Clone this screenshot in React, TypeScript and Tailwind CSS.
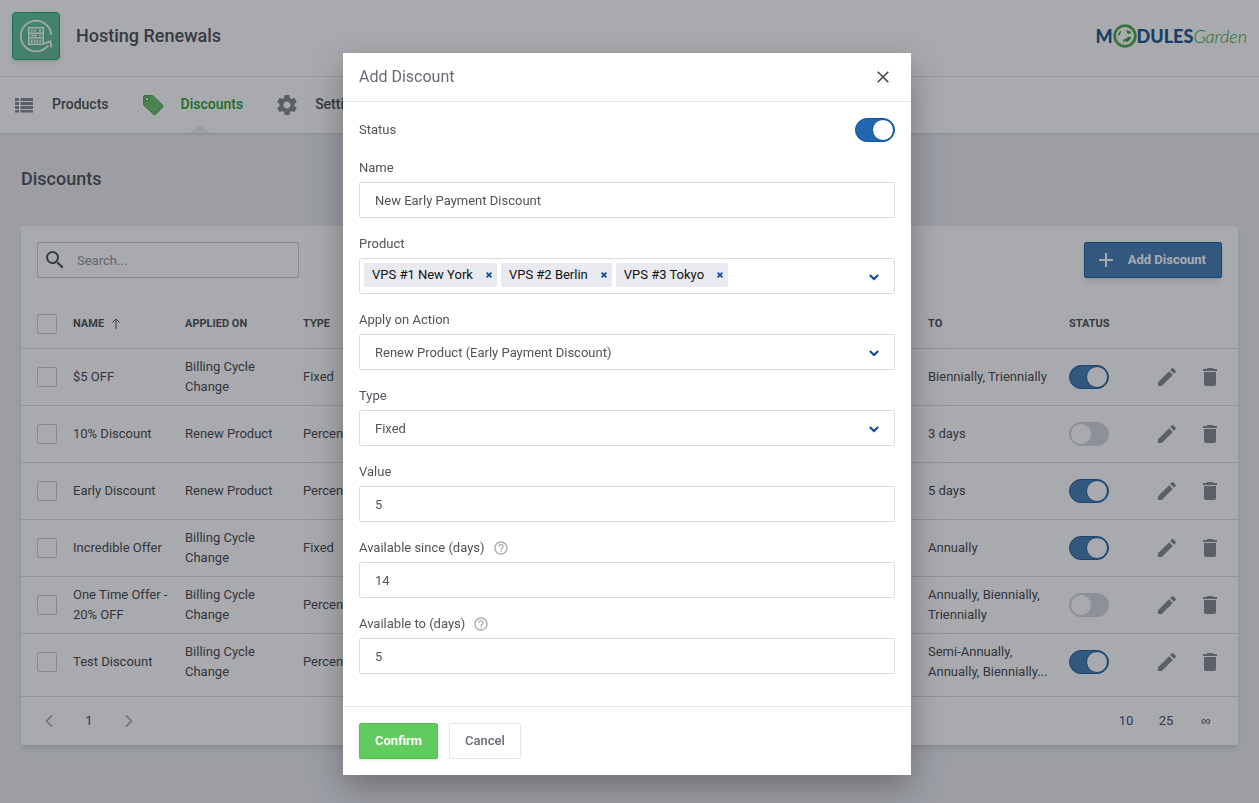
import React from "react";
import { MdDelete, MdEdit, MdHelpOutline, MdSearch } from "react-icons/md";

type Discount = {
  name: string;
  appliedOn: string;
  type: string;
  to: string;
  active: boolean;
};

const discounts: Discount[] = [
  { name: "$5 OFF", appliedOn: "Billing Cycle Change", type: "Fixed", to: "Biennially, Triennially", active: true },
  { name: "10% Discount", appliedOn: "Renew Product", type: "Percentage", to: "3 days", active: false },
  { name: "Early Discount", appliedOn: "Renew Product", type: "Percentage", to: "5 days", active: true },
  { name: "Incredible Offer", appliedOn: "Billing Cycle Change", type: "Fixed", to: "Annually", active: true },
  { name: "One Time Offer - 20% OFF", appliedOn: "Billing Cycle Change", type: "Percentage", to: "Annually, Biennially, Triennially", active: false },
  { name: "Test Discount", appliedOn: "Billing Cycle Change", type: "Percentage", to: "Semi-Annually, Annually, Biennially...", active: true },
];

const products = ["VPS #1 New York", "VPS #2 Berlin", "VPS #3 Tokyo"];

function AppIcon() {
  return (
    <svg viewBox="0 0 48 48" className="size-12 rounded-sm shadow-md" aria-hidden="true">
      <defs>
        <linearGradient id="app-bg" x1="0" y1="0" x2="1" y2="1">
          <stop offset="0" stopColor="#4fc498" />
          <stop offset="1" stopColor="#5cb492" />
        </linearGradient>
      </defs>
      <rect x="0.5" y="0.5" width="47" height="47" rx="2.5" fill="url(#app-bg)" stroke="#0fa268" />
      <g fill="none" stroke="#fff" strokeWidth="1.7">
        <path d="M39.3 23 A15.3 15.3 0 1 0 36.3 33.2" />
        <path d="M32 31.8 L38.3 29.2 L39.5 35.5" />
        <path d="M16.8 15.8 H31.2 V32.2 H16.8 Z" strokeWidth="1.5" />
        <path d="M17 21.2 H31 M17 25.8 H31" strokeWidth="1.5" />
      </g>
      <path d="M19 17.8 h2 v1.6 h-2 z M22 17.8 h2 v1.6 h-2 z M27 17.8 h2 v1.6 h-2 z M19 22.8 h6 v1.4 h-6 z M27 22.8 h2 v1.4 h-2 z M19 27.4 h1.5 v3.4 H19 z M21.8 27.4 h1.5 v3.4 h-1.5 z M24.6 27.4 h1.5 v3.4 h-1.5 z M27.4 27.4 h1.5 v3.4 h-1.5 z" fill="#fff" />
    </svg>
  );
}

function ListIcon() {
  return (
    <svg viewBox="0 0 24 24" className="size-6 fill-[#7d828c]" aria-hidden="true">
      <path d="M3 5h4v3H3zM8.5 5H21v3H8.5zM3 9h4v3H3zM8.5 9H21v3H8.5zM3 13h4v3H3zM8.5 13H21v3H8.5zM3 17h4v2.5H3zM8.5 17H21v2.5H8.5z" />
    </svg>
  );
}

function TagIcon() {
  return (
    <svg viewBox="0 0 24 24" className="size-6" aria-hidden="true">
      <path
        fillRule="evenodd"
        d="M3 2.7 L11.2 2.7 Q11.9 2.7 12.4 3.2 L21.8 12.5 Q22.5 13.2 21.8 13.9 L14.4 21.5 Q13.7 22.2 13 21.5 L3.1 12.6 Q2.7 12.2 2.7 11.6 L2.7 3.1 Z M6 4.3 A1.7 1.7 0 1 0 6 7.7 A1.7 1.7 0 1 0 6 4.3 Z"
        fill="#68bd68"
        stroke="#1c9d30"
        strokeWidth="1"
      />
    </svg>
  );
}

function GearIcon() {
  return (
    <svg viewBox="0 0 24 24" className="size-6 fill-[#7d828c]" aria-hidden="true">
      <path d="M19.43 12.98c.04-.32.07-.64.07-.98s-.03-.66-.07-.98l2.11-1.65c.19-.15.24-.42.12-.64l-2-3.46c-.12-.22-.39-.3-.61-.22l-2.49 1c-.52-.4-1.08-.73-1.69-.98l-.38-2.65C14.46 2.18 14.25 2 14 2h-4c-.25 0-.46.18-.49.42l-.38 2.65c-.61.25-1.17.59-1.69.98l-2.49-1c-.23-.09-.49 0-.61.22l-2 3.46c-.13.22-.07.49.12.64l2.11 1.65c-.04.32-.07.65-.07.98s.03.66.07.98l-2.11 1.65c-.19.15-.24.42-.12.64l2 3.46c.12.22.39.3.61.22l2.49-1c.52.4 1.08.73 1.69.98l.38 2.65c.03.24.24.42.49.42h4c.25 0 .46-.18.49-.42l.38-2.65c.61-.25 1.17-.59 1.69-.98l2.49 1c.23.09.49 0 .61-.22l2-3.46c.12-.22.07-.49-.12-.64l-2.11-1.65zM12 15.5c-1.93 0-3.5-1.57-3.5-3.5s1.57-3.5 3.5-3.5 3.5 1.57 3.5 3.5-1.57 3.5-3.5 3.5z" />
    </svg>
  );
}

function Globe() {
  return (
    <svg viewBox="0 0 26 26" className="size-6 shrink-0" aria-hidden="true">
      <circle cx="13" cy="13" r="11.2" fill="none" stroke="#4fae52" strokeWidth="3" />
      <circle cx="13" cy="13" r="11.2" fill="none" stroke="#2f9a38" strokeWidth="1" />
      <g fill="#2f9a38">
        <path d="M5.5 11.5 L7 8.5 L9 7.2 L8.6 9.6 L7.4 10 L7.6 12 L6.2 12.6 Z" />
        <path d="M14 7 L15.8 6 L15.4 7.6 L17.5 7.2 L19.4 8.8 L19.2 10.6 L17.6 10 L17 11 L15 9.6 L15.4 8.6 Z" />
        <path d="M10.8 18.2 L12.8 16 L14.5 16.2 L16 14 L18.2 14.2 L19.4 13.4 L19.2 16 L16.5 18.8 L13.8 19.8 L14 18 L12.6 18.1 L12 19.8 L10.8 19.6 Z" />
      </g>
    </svg>
  );
}

function ArrowGlyph({ d, className }: { d: string; className: string }) {
  return (
    <svg viewBox="0 0 16 16" className={className} fill="none" stroke="currentColor" aria-hidden="true">
      <path d={d} />
    </svg>
  );
}

const toggleClass =
  "block h-6 w-10 shrink-0 cursor-pointer appearance-none rounded-full border border-[#d0d2de] bg-[#d0d2de] before:block before:size-[22px] before:rounded-full before:border before:border-[#d0d2de] before:bg-white checked:before:translate-x-4";
const strongToggle = "checked:border-[#0d54a6] checked:bg-[#2167b0] checked:before:border-[#0d54a6]";
const softToggle = "checked:border-[#0d5a9a] checked:bg-[#3b77b2] checked:before:border-[#0d5a9a]";

function Toggle({ label, on, id, soft }: { label?: string; on: boolean; id?: string; soft?: boolean }) {
  return (
    <input
      type="checkbox"
      role="switch"
      id={id}
      aria-label={label}
      defaultChecked={on}
      className={`${toggleClass} ${soft ? softToggle : strongToggle}`}
    />
  );
}

const checkboxClass = "block size-5 appearance-none rounded-xs border border-[#c4c6d3] bg-white checked:bg-[#2167b0]";
const fieldClass =
  "h-9 w-full appearance-none rounded-xs border border-[#d8dae6] bg-white px-[15px] text-[13px] leading-5 text-[#505459]";

function Field({ id, label, help, children }: { id: string; label: string; help?: boolean; children: React.ReactNode }) {
  return (
    <div className="flex flex-col gap-1">
      <div className="flex h-5 items-center gap-2">
        <label htmlFor={id}>{label}</label>
        {help && <MdHelpOutline className="size-4 text-[#a9abae]" aria-hidden="true" />}
      </div>
      {children}
    </div>
  );
}

function Caret() {
  return (
    <ArrowGlyph
      d="M3.8 6 L8 10 L12.2 6"
      className="pointer-events-none absolute top-[11px] right-[13px] size-4 stroke-2 text-[#0d47a1]"
    />
  );
}

function SelectField({ id, value }: { id: string; value: string }) {
  return (
    <div className="relative">
      <select id={id} className={`${fieldClass} pt-px`} defaultValue={value}>
        <option>{value}</option>
      </select>
      <Caret />
    </div>
  );
}

function Header() {
  return (
    <header className="bg-white shadow-sm">
      <div className="flex h-[77px] items-center justify-between border-b border-[#e3e4ea] px-3 pb-1">
        <div className="flex items-center gap-4">
          <AppIcon />
          <h1 className="text-lg font-medium text-[#42464e]">Hosting Renewals</h1>
        </div>
        <a href="#home" className="flex items-center font-[Lato] text-[18px] leading-6" aria-label="ModulesGarden">
          <span className="font-black text-[#0c4d8c]">M</span>
          <Globe />
          <span className="font-black text-[#0c4d8c]">DULES</span>
          <span className="font-light text-[#169b1c] italic">Garden</span>
        </a>
      </div>
      <nav className="flex h-14 items-center gap-8 px-3 text-sm font-medium text-[#42464e]">
        <a href="#products" className="flex items-center gap-4">
          <ListIcon />
          <span className="pb-0.5">Products</span>
        </a>
        <a href="#discounts" className="relative flex h-full items-center gap-4 text-[#169b1c]">
          <TagIcon />
          <span className="pb-0.5">Discounts</span>
          <span className="absolute right-0 bottom-0 left-4 flex justify-center">
            <svg viewBox="0 0 20 8" className="h-2 w-5" aria-hidden="true">
              <path d="M0 8 L8.8 0.6 Q10 -0.3 11.2 0.6 L20 8 Z" fill="#e9ebf1" />
            </svg>
          </span>
        </a>
        <a href="#settings" className="flex items-center gap-4">
          <GearIcon />
          <span className="pb-0.5">Settings</span>
        </a>
      </nav>
    </header>
  );
}

function DiscountTable() {
  return (
    <table className="mb-[6px] w-full table-fixed text-left">
      <colgroup>
        <col className="w-[52px]" />
        <col className="w-28" />
        <col className="w-[118px]" />
        <col />
        <col className="w-[141px]" />
        <col className="w-[86px]" />
        <col className="w-[83px]" />
      </colgroup>
      <thead>
        <tr className="h-[50px] text-[11px] text-[#42464e] uppercase">
          <th className="pt-0.5 pl-4">
            <input type="checkbox" aria-label="Select all discounts" className={checkboxClass} />
          </th>
          <th className="pt-0.5 font-bold">
            <span className="flex items-center gap-1">
              Name
              <ArrowGlyph d="M8 13 V3 M4.5 6.5 L8 3 L11.5 6.5" className="size-4" />
            </span>
          </th>
          <th className="pt-0.5 font-bold">Applied on</th>
          <th className="pt-0.5 font-bold">Type</th>
          <th className="pt-0.5 font-bold">To</th>
          <th className="pt-0.5 font-bold">Status</th>
          <th aria-label="Actions" />
        </tr>
      </thead>
      <tbody className="text-[#383c45]">
        {discounts.map((d) => (
          <tr key={d.name} className="h-[57px] border-t border-[#d8dae6]">
            <td className="pl-4">
              <input type="checkbox" aria-label={`Select ${d.name}`} className={checkboxClass} />
            </td>
            <td className="pr-2">{d.name}</td>
            <td className="pr-2">{d.appliedOn}</td>
            <td className="pr-2">{d.type}</td>
            <td className="pr-4">{d.to}</td>
            <td>
              <Toggle soft on={d.active} label={`${d.name} status`} />
            </td>
            <td>
              <div className="flex justify-between pr-4 text-[#7d828c]">
                <button type="button" aria-label={`Edit ${d.name}`}>
                  <MdEdit className="size-6" />
                </button>
                <button type="button" aria-label={`Delete ${d.name}`}>
                  <MdDelete className="size-6" />
                </button>
              </div>
            </td>
          </tr>
        ))}
      </tbody>
    </table>
  );
}

function Pagination() {
  return (
    <div className="flex h-[49px] items-center justify-between border-t border-[#d8dae6] pr-3 pl-2">
      <div className="flex items-center">
        <button type="button" aria-label="Previous page" className="flex w-10 justify-center text-[#9b9da3]">
          <ArrowGlyph d="M11 2.5 L5.5 8 L11 13.5" className="size-4 stroke-[1.6]" />
        </button>
        <button type="button" className="w-10 text-[#1d4370]">1</button>
        <button type="button" aria-label="Next page" className="flex w-10 justify-center text-[#9b9da3]">
          <ArrowGlyph d="M5 2.5 L10.5 8 L5 13.5" className="size-4 stroke-[1.6]" />
        </button>
      </div>
      <div className="flex text-[#42464e]">
        <button type="button" className="w-10 text-[#0d4a86]">10</button>
        <button type="button" className="w-10">25</button>
        <button type="button" className="w-10 font-['Liberation_Sans'] text-[13px]">∞</button>
      </div>
    </div>
  );
}

function ProductPicker({ id }: { id: string }) {
  return (
    <div className="relative">
      <div className="flex h-9 items-center gap-1 rounded-xs border border-[#d8dae6] pr-9 pb-[2px] pl-1 text-[#111]">
        {products.map((p) => (
          <span key={p} className="flex h-6 shrink-0 items-center gap-3 rounded-xs bg-[#e9eaf0] pr-1 pl-2">
            {p}
            <button type="button" aria-label={`Remove ${p}`} className="text-[#0d47a1]">
              <ArrowGlyph d="M5.6 5.6 L10.4 10.4 M10.4 5.6 L5.6 10.4" className="-mx-1 size-4 stroke-[1.6]" />
            </button>
          </span>
        ))}
        <input id={id} type="text" className="h-6 w-0 min-w-0 grow outline-none" />
      </div>
      <Caret />
    </div>
  );
}

function AddDiscountDialog() {
  return (
    <div className="fixed inset-0 flex items-start justify-center overflow-y-auto bg-[#272b33]/40 pt-[53px] pr-[5px]">
      <form
        role="dialog"
        aria-modal="true"
        aria-labelledby="dialog-title"
        className="w-full max-w-[568px] bg-white text-[13px] leading-5 text-[#505459] shadow-[0_12px_32px_rgba(0,0,0,0.3)]"
      >
        <div className="flex h-[49px] items-center justify-between border-b border-[#e5e6ec] px-4">
          <h2 id="dialog-title" className="text-base text-[#666b76]">Add Discount</h2>
          <button type="button" aria-label="Close" className="flex w-6 justify-center text-[#42464e]">
            <ArrowGlyph d="M2.7 2.7 L13.3 13.3 M13.3 2.7 L2.7 13.3" className="size-4 stroke-[1.6]" />
          </button>
        </div>
        <div className="flex flex-col gap-4 px-4 pt-4 pb-8">
          <div className="flex items-center justify-between">
            <label htmlFor="status">Status</label>
            <Toggle id="status" on />
          </div>
          <Field id="name" label="Name">
            <input id="name" type="text" defaultValue="New Early Payment Discount" className={fieldClass} />
          </Field>
          <Field id="product" label="Product">
            <ProductPicker id="product" />
          </Field>
          <Field id="action" label="Apply on Action">
            <SelectField id="action" value="Renew Product (Early Payment Discount)" />
          </Field>
          <Field id="type" label="Type">
            <SelectField id="type" value="Fixed" />
          </Field>
          <Field id="value" label="Value">
            <input id="value" type="text" defaultValue="5" className={fieldClass} />
          </Field>
          <Field id="since" label="Available since (days)" help>
            <input id="since" type="text" defaultValue="14" className={fieldClass} />
          </Field>
          <Field id="to" label="Available to (days)" help>
            <input id="to" type="text" defaultValue="5" className={fieldClass} />
          </Field>
        </div>
        <div className="flex gap-[11px] border-t border-[#e5e6ec] p-4">
          <button type="button" className="h-9 rounded-xs border border-[#4fc54c] bg-[#62cb60] px-[15px] font-bold text-white shadow-sm">
            Confirm
          </button>
          <button type="button" className="h-9 rounded-xs border border-[#e5e6ec] bg-white px-[15px] font-medium text-[#666b76]">
            Cancel
          </button>
        </div>
      </form>
    </div>
  );
}

export default function App() {
  return (
    <div className="min-h-screen bg-[#e9ebf1] font-[Roboto,sans-serif] text-[13px] leading-5 text-[#42464e]">
      <Header />
      <main className="px-[21px] pt-8 pb-14">
        <h2 className="text-lg leading-7 font-medium">Discounts</h2>
        <section className="mt-[33px] rounded-xs bg-white shadow-md">
          <div className="flex justify-between px-4 pt-4 pb-5">
            <div className="flex h-9 w-[262px] items-center gap-[10px] rounded-xs border border-[#c4c6d3] px-[5px]">
              <MdSearch className="size-6 shrink-0" aria-hidden="true" />
              <input
                type="search"
                aria-label="Search discounts"
                placeholder="Search..."
                className="w-full min-w-0 appearance-none pt-0.5 outline-none placeholder:text-[#8a8d94]"
              />
            </div>
            <button
              type="button"
              className="flex h-9 items-center gap-[14px] rounded-xs border border-[#0d5a9a] bg-[#3b77b2] pr-[15px] pl-[13px] font-bold text-white shadow-md"
            >
              <ArrowGlyph d="M8 1 V15 M1 8 H15" className="size-4 stroke-2" />
              Add Discount
            </button>
          </div>
          <DiscountTable />
          <Pagination />
        </section>
      </main>
      <AddDiscountDialog />
    </div>
  );
}
